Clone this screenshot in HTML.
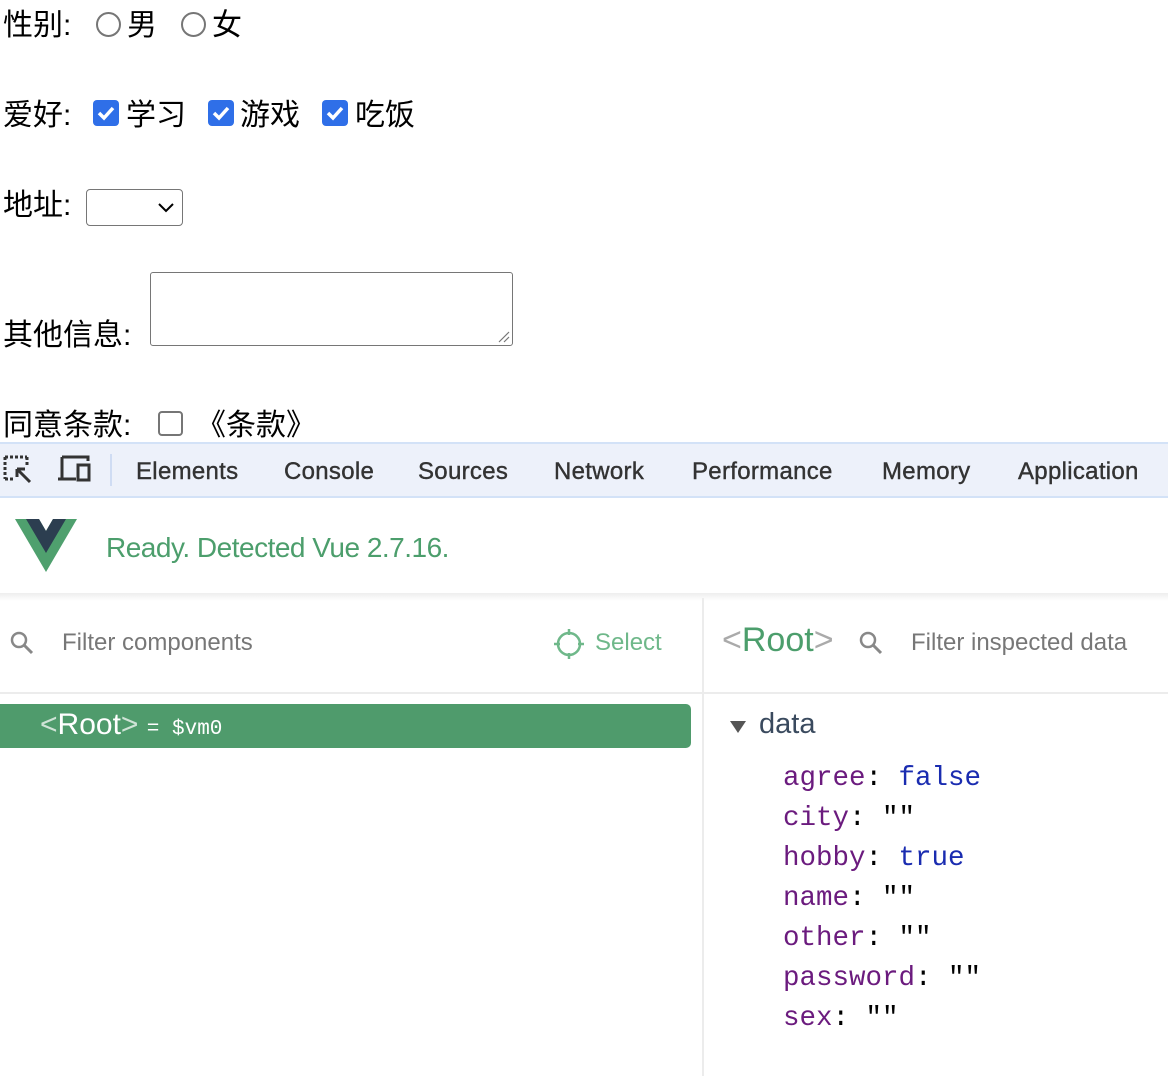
<!DOCTYPE html>
<html><head><meta charset="utf-8"><style>
*{margin:0;padding:0;box-sizing:border-box}
body{width:1168px;height:1076px;background:#fff;position:relative;overflow:hidden;font-family:"Liberation Sans","Noto Sans CJK SC",sans-serif;color:#000}
.a{position:absolute;white-space:nowrap}
.cn{font-size:30px;line-height:32px}
.radio{position:absolute;width:25px;height:25px;border:2px solid #767676;border-radius:50%}
.cb{position:absolute;width:26px;height:26px;border-radius:4px;background:#2f6fe8}
.cbe{position:absolute;width:25px;height:25px;border-radius:4px;border:2px solid #767676}
.tab{position:absolute;top:457px;font-size:24px;color:#333;line-height:30px;letter-spacing:0.3px;-webkit-text-stroke:0.4px #333}
.mono{font-family:"Liberation Mono","DejaVu Sans Mono",monospace;font-size:27.5px;line-height:30px}
.k{color:#6b1b7e}
</style></head><body>
<div class="a cn" style="left:3px;top:10px">性别:</div>
<div class="radio" style="left:96px;top:12px"></div>
<div class="a cn" style="left:127px;top:10px">男</div>
<div class="radio" style="left:181px;top:12px"></div>
<div class="a cn" style="left:212px;top:10px">女</div>

<div class="a cn" style="left:3px;top:100px">爱好:</div>
<div class="cb" style="left:93px;top:100px"><svg width="26" height="26"><path d="M6 13l5 5 9-10" stroke="#fff" stroke-width="3.5" fill="none"/></svg></div>
<div class="a cn" style="left:126px;top:100px">学习</div>
<div class="cb" style="left:208px;top:100px"><svg width="26" height="26"><path d="M6 13l5 5 9-10" stroke="#fff" stroke-width="3.5" fill="none"/></svg></div>
<div class="a cn" style="left:240px;top:100px">游戏</div>
<div class="cb" style="left:322px;top:100px"><svg width="26" height="26"><path d="M6 13l5 5 9-10" stroke="#fff" stroke-width="3.5" fill="none"/></svg></div>
<div class="a cn" style="left:355px;top:100px">吃饭</div>

<div class="a cn" style="left:3px;top:190px">地址:</div>
<div class="a" style="left:86px;top:189px;width:97px;height:37px;border:1.5px solid #767676;border-radius:4px"><svg width="20" height="12" style="position:absolute;left:70px;top:12px"><path d="M2 2l7 7 7-7" stroke="#000" stroke-width="2" fill="none"/></svg></div>

<div class="a cn" style="left:3px;top:320px">其他信息:</div>
<div class="a" style="left:150px;top:272px;width:363px;height:74px;border:1.5px solid #767676;border-radius:3px"><svg width="14" height="14" style="position:absolute;right:1px;bottom:1px"><path d="M2 12L12 2M7 12L12 7" stroke="#777" stroke-width="1.2"/></svg></div>

<div class="a cn" style="left:3px;top:410px">同意条款:</div>
<div class="cbe" style="left:158px;top:411px"></div>
<div class="a cn" style="left:196px;top:410px">《条款》</div>

<div class="a" style="left:0;top:442px;width:1168px;height:56px;background:#edf1fa;border-top:2px solid #d3e2f7;border-bottom:2px solid #d3e2f7"></div>
<svg class="a" style="left:3px;top:455px" width="32" height="32"><path d="M2 2h22M2 2v22M2 24h8M24 2v8" stroke="#333" stroke-width="3" stroke-dasharray="3 2" fill="none"/><path d="M14 14l13 13M14 14h8M14 14v8" stroke="#333" stroke-width="3" fill="none"/></svg>
<svg class="a" style="left:57px;top:455px" width="36" height="30"><path d="M5 2h26v4M5 2v22M1 24h18" stroke="#333" stroke-width="3" fill="none"/><rect x="21" y="10" width="11" height="15" stroke="#333" stroke-width="3" fill="none"/></svg>
<div class="a" style="left:110px;top:454px;width:2px;height:32px;background:#cfdcf3"></div>
<div class="tab" style="left:136px">Elements</div>
<div class="tab" style="left:284px">Console</div>
<div class="tab" style="left:418px">Sources</div>
<div class="tab" style="left:554px">Network</div>
<div class="tab" style="left:692px">Performance</div>
<div class="tab" style="left:882px">Memory</div>
<div class="tab" style="left:1018px">Application</div>

<svg class="a" style="left:15px;top:519px" width="62" height="54"><path d="M0 0h24l7 12 7-12h24L31 53z" fill="#4fa06e"/><path d="M11 0h13l7 12 7-12h13L31 34z" fill="#2c3e50"/></svg>
<div class="a" style="left:106px;top:532px;font-size:28px;color:#4c9e6c;letter-spacing:-0.5px">Ready. Detected Vue 2.7.16.</div>
<div class="a" style="left:0;top:593px;width:1168px;height:8px;background:linear-gradient(#eee,#fff)"></div>

<svg class="a" style="left:9px;top:630px" width="26" height="26"><circle cx="10" cy="10" r="7" stroke="#888" stroke-width="2.5" fill="none"/><path d="M15 15l8 8" stroke="#888" stroke-width="3"/></svg>
<div class="a" style="left:62px;top:629px;font-size:24px;color:#777">Filter components</div>
<svg class="a" style="left:553px;top:628px" width="32" height="32"><circle cx="16" cy="16" r="11" stroke="#6fb88a" stroke-width="2.5" fill="none"/><path d="M16 1v6M16 25v6M1 16h6M25 16h6" stroke="#6fb88a" stroke-width="2.5"/></svg>
<div class="a" style="left:595px;top:629px;font-size:24px;color:#6fb88a">Select</div>
<div class="a" style="left:0;top:692px;width:702px;height:2px;background:#ececec"></div>
<div class="a" style="left:0;top:704px;width:691px;height:44px;background:#4f9b6c;border-radius:0 5px 5px 0"></div>
<div class="a" style="left:40px;top:707px;font-size:30px;color:#fff;line-height:36px"><span style="color:#cfe3d6">&lt;</span>Root<span style="color:#cfe3d6">&gt;</span> <span class="mono" style="font-size:21px">= $vm0</span></div>

<div class="a" style="left:702px;top:598px;width:2px;height:478px;background:#ececec"></div>
<div class="a" style="left:704px;top:692px;width:464px;height:2px;background:#ececec"></div>
<div class="a" style="left:722px;top:620px;font-size:34px;color:#4c9e6c;line-height:40px"><span style="color:#aaa">&lt;</span>Root<span style="color:#aaa">&gt;</span></div>
<svg class="a" style="left:858px;top:630px" width="26" height="26"><circle cx="10" cy="10" r="7" stroke="#888" stroke-width="2.5" fill="none"/><path d="M15 15l8 8" stroke="#888" stroke-width="3"/></svg>
<div class="a" style="left:911px;top:629px;font-size:24px;color:#777">Filter inspected data</div>
<svg class="a" style="left:729px;top:719px" width="18" height="16"><path d="M1 2h16L9 14z" fill="#555"/></svg>
<div class="a" style="left:759px;top:708px;font-size:29px;color:#3a4a5e">data</div>
<div class="a mono" style="left:783px;top:759px;line-height:40px">
<div><span class="k">agree</span>: <span style="color:#1a2cb0">false</span></div>
<div><span class="k">city</span>: ""</div>
<div><span class="k">hobby</span>: <span style="color:#1a2cb0">true</span></div>
<div><span class="k">name</span>: ""</div>
<div><span class="k">other</span>: ""</div>
<div><span class="k">password</span>: ""</div>
<div><span class="k">sex</span>: ""</div>
</div>
</body></html>
